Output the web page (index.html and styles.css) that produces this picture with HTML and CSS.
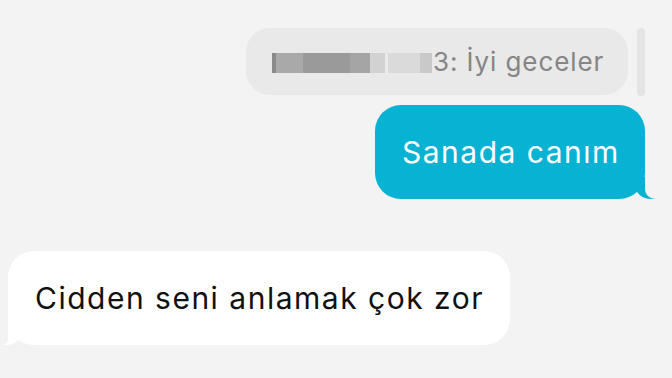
FILE: index.html
```html
<!DOCTYPE html>
<html lang="tr">
<head>
  <meta charset="UTF-8" />
  <meta name="viewport" content="width=device-width, initial-scale=1.0"/>
  <title>Mesajlar</title>
  <link rel="stylesheet" href="styles.css">
</head>
<body>

<div class="chat">

  <!-- Quoted reply -->
  <div class="row row-out quote-row">
    <div class="quote">
      <span class="blur">
        <i class="px px-a"></i><i class="px px-b"></i><i class="px px-c"></i><i class="px px-d"></i><i class="px px-e"></i>
        <i class="gap"></i>
        <i class="px px-f"></i><i class="px px-g"></i>
      </span>
      <span class="quote-text">3: İyi geceler</span>
    </div>
    <div class="quote-bar"></div>
  </div>

  <!-- Sent -->
  <div class="row row-out">
    <div class="bubble sent">Sanada canım</div>
  </div>

  <!-- Received -->
  <div class="row row-in">
    <div class="bubble received">Cidden seni anlamak çok zor</div>
  </div>

</div>

</body>
</html>
```

FILE: styles.css
```css
body {
  margin: 0;
  background: #f3f3f3;
  font-family: Inter, "Liberation Sans", Arial, sans-serif;
}

.chat {
  display: flex;
  flex-direction: column;
  padding-top: 28px;
}

.row {
  display: flex;
}

.row-out {
  justify-content: flex-end;
}

.row-in {
  justify-content: flex-start;
}

/* quoted message */
.quote-row {
  padding-right: 27px;
  gap: 9px;
}

.quote {
  width: 382px;
  height: 67px;
  box-sizing: border-box;
  background: #e9e9e9;
  border-radius: 24px;
  display: flex;
  align-items: center;
  padding-left: 26px;
}

.quote-text {
  color: #858585;
  font-size: 26px;
  letter-spacing: 0.9px;
  margin-left: 1px;
}

.blur {
  display: flex;
  height: 20px;
  margin-top: 3px;
  filter: blur(0.6px);
}

.blur i {
  display: block;
  height: 100%;
}

.px-a { width: 4px; background: #8a8a8a; }
.px-b { width: 27px; background: #a9a9a9; }
.px-c { width: 47px; background: #9a9a9a; }
.px-d { width: 20px; background: #a5a5a5; }
.px-e { width: 15px; background: #d2d2d2; }
.gap  { width: 3px; }
.px-f { width: 32px; background: #dadada; }
.px-g { width: 12px; background: #c9c9c9; }

.quote-bar {
  width: 8px;
  height: 68px;
  border-radius: 4px;
  background: #e4e4e4;
}

/* bubbles */
.bubble {
  position: relative;
  height: 94px;
  box-sizing: border-box;
  display: flex;
  align-items: center;
  border-radius: 26px;
  font-size: 30px;
  letter-spacing: 1.5px;
}

.sent {
  margin-top: 9px;
  margin-right: 27px;
  width: 270px;
  padding-left: 27px;
  background: #08b2d3;
  color: #fff;
}

.sent::before,
.received::before {
  content: "";
  position: absolute;
  bottom: 0;
  width: 20px;
  height: 22px;
}

.sent::after,
.received::after {
  content: "";
  position: absolute;
  bottom: 0;
  width: 10px;
  height: 22px;
  background: #f3f3f3;
}

.sent::before {
  right: -10px;
  background: #08b2d3;
  border-bottom-left-radius: 16px 14px;
}

.sent::after {
  right: -10px;
  border-bottom-left-radius: 10px;
}

.received {
  margin-top: 52px;
  margin-left: 8px;
  width: 502px;
  padding-left: 27px;
  background: #fff;
  color: #111;
}

.received::before {
  left: -6px;
  background: #fff;
  border-bottom-right-radius: 16px 14px;
}

.received::after {
  left: -6px;
  width: 6px;
  border-bottom-right-radius: 6px;
}
```
